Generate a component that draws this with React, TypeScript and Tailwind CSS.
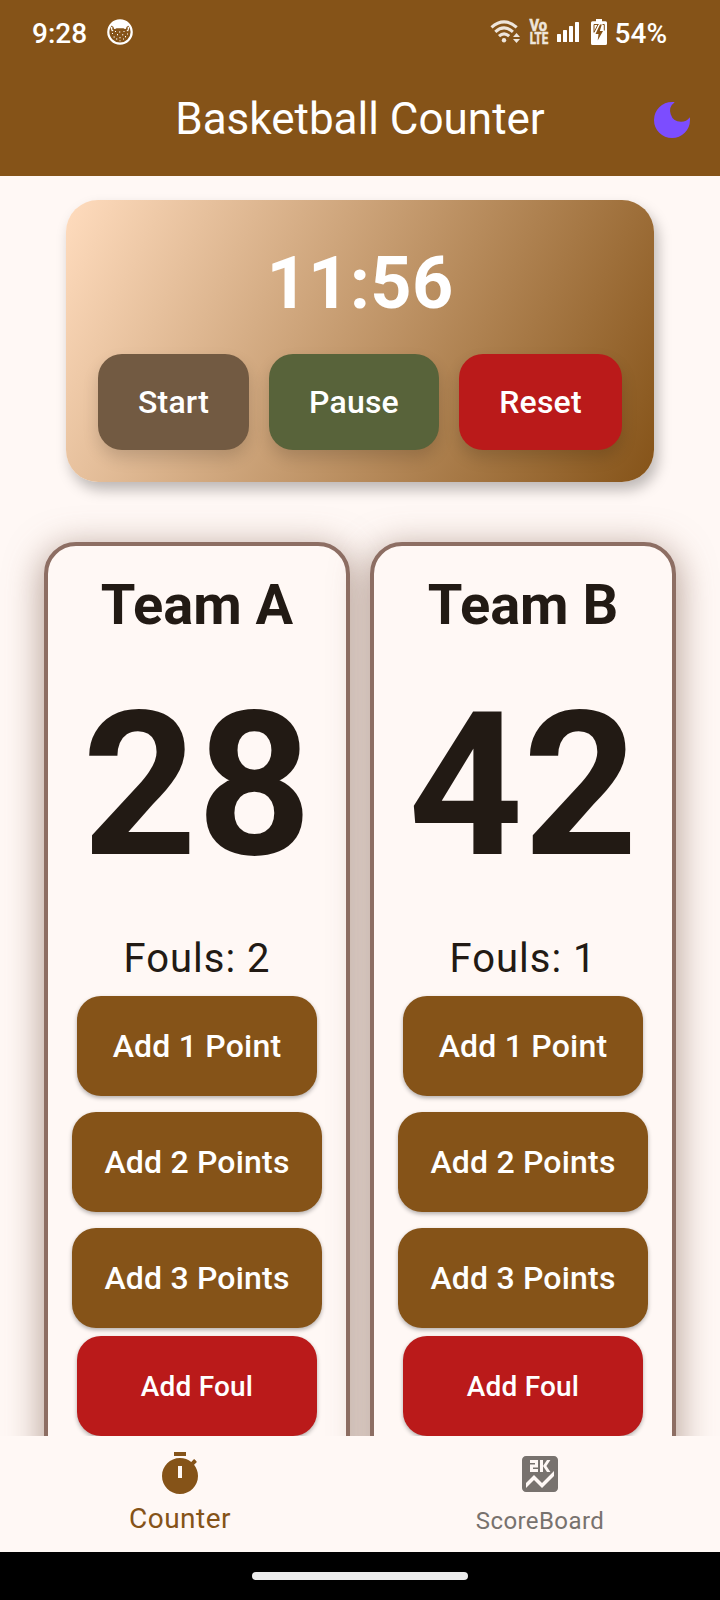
import React from "react";
import { MdDarkMode, MdScore } from "react-icons/md";

function CatIcon() {
  return (
    <svg className="ml-5 mt-[1px] h-[26px] w-[26px]" viewBox="0 0 26 26">
      <circle cx="13" cy="13" r="11.7" fill="none" stroke="#fff" strokeWidth="2.2" />
      <path
        d="M4 6C6 3 9 1.200 13 1.200S20 3 22 6L19.500 8C19.300 9.500 18.800 10.300 17.800 10L16.500 9.200H9.500L8.200 10C7.200 10.300 6.700 9.500 6.500 8Z"
        fill="#fff"
      />
      <g fill="#fff">
        <path d="M3.500 8.500l1.800-1v3l1.300 1.500-1.800.3zM22.500 8.500l-1.800-1v3L19.400 12l1.800.3z" />
        <rect x="5" y="14" width="1" height="1" />
        <rect x="8" y="12" width="1" height="1" />
        <rect x="12" y="12.500" width="1.300" height="1" />
        <rect x="16.500" y="12" width="1" height="1" />
        <rect x="20" y="14.500" width="1" height="1" />
        <rect x="10" y="15" width="1" height="1.300" />
        <rect x="15" y="15.300" width="1.300" height="1" />
        <rect x="6.500" y="17.500" width="1.300" height="1" />
        <rect x="18" y="17" width="1" height="1.300" />
        <rect x="9" y="19.500" width="1.300" height="1" />
        <rect x="12.500" y="18" width="1" height="1.300" />
        <rect x="16" y="19.500" width="1" height="1" />
        <rect x="12.500" y="21.300" width="1" height="1" />
      </g>
    </svg>
  );
}

function SystemIcons() {
  return (
    <svg className="h-[28px] w-[120px] overflow-visible" viewBox="490 18 120 28">
      <g fill="none" stroke="#eee5db" strokeWidth="3.100">
        <path d="M491.500 27.300Q504 16.300 516.700 27.300" />
        <path d="M495.300 31.800Q504 24 512.900 31.800" />
        <path d="M499 36.200Q504 31.700 509.200 36.200" />
      </g>
      <circle cx="504" cy="40.200" r="2.200" fill="#eee5db" />
      <path d="M513 37l3.500-4 3.500 4zM513 39l3.500 4 3.500-4z" fill="#eee5db" />
      <g
        fill="#eee5db"
        stroke="#eee5db"
        strokeWidth="0.600"
        fontFamily="Roboto, sans-serif"
        fontWeight="700"
      >
        <text x="529.500" y="31" fontSize="16" textLength="17.500" lengthAdjust="spacingAndGlyphs">Vo</text>
        <text x="529.700" y="43.800" fontSize="16" textLength="18.500" lengthAdjust="spacingAndGlyphs">LTE</text>
      </g>
      <g fill="#fff">
        <rect x="557" y="34" width="4" height="8" rx="0.600" />
        <rect x="563" y="30" width="4" height="12" rx="0.600" />
        <rect x="569" y="26" width="4" height="16" rx="0.600" />
        <rect x="575" y="22" width="4" height="20" rx="0.600" />
        <path d="M596 19h6v2.300h3.500q1.500 0 1.500 1.500V43.500q0 1.500-1.500 1.500h-13q-1.500 0-1.500-1.500V22.800q0-1.500 1.500-1.500H596z" />
      </g>
      <path d="M600 24.500L595.500 34h3l-.8 6.500 5.300-9.500h-3.200l2-6.500z" fill="#855318" />
      <path d="M598.500 24.500h-4.500v7.800l4-7.800M602.500 24.500h1.800v6" fill="none" stroke="#855318" strokeWidth="1" />
    </svg>
  );
}

function StopwatchIcon() {
  return (
    <svg className="h-12 w-12" viewBox="0 0 24 24" fill="currentColor" fillRule="evenodd">
      <path d="M15 1H9v2h6V1zm-4 13h2V8h-2v6zm8.030-6.610l1.420-1.420c-.43-.51-.9-.99-1.410-1.410l-1.420 1.420C16.070 4.740 14.120 4 12 4c-4.970 0-9 4.030-9 9s4.020 9 9 9 9-4.030 9-9c0-2.120-.74-4.070-1.970-5.610z" />
    </svg>
  );
}

const timerButton =
  "flex h-24 items-center justify-center rounded-3xl text-[32px] font-medium tracking-[0.2px] text-white shadow-[0_8px_16px_rgba(0,0,0,0.15)]";

function TimerCard() {
  return (
    <section className="mx-auto mt-6 flex h-[282px] w-[588px] shrink-0 flex-col rounded-[32px] bg-[linear-gradient(115.6deg,#ffdcbe,#855318)] px-8 pt-[34px] shadow-[4px_8px_14px_rgba(0,0,0,0.26)]">
      <div className="h-[100px] text-center text-[72px] font-bold leading-[100px] tracking-[0.3px] text-white">11:56</div>
      <div className="mt-5 flex justify-between">
        <button className={`${timerButton} w-[151px] bg-[#725a42]`}>Start</button>
        <button className={`${timerButton} w-[170px] bg-[#58633a]`}>Pause</button>
        <button className={`${timerButton} w-[163px] bg-[#ba1a1a]`}>Reset</button>
      </div>
    </section>
  );
}

const actionButton =
  "flex h-[100px] shrink-0 items-center justify-center rounded-3xl text-white shadow-[0_2px_4px_rgba(0,0,0,0.3)]";

function TeamCard({ name, score, fouls }: { name: string; score: number; fouls: number }) {
  return (
    <section className="flex h-[940px] w-[306px] flex-col items-center rounded-[32px] border-4 border-[#8d6e63] bg-[#fff8f5] pt-[23px] text-[#221a14] shadow-[0_8px_34px_4px_rgba(138,106,92,0.58)]">
      <h2 className="h-[72px] text-[56px] font-bold leading-[72px]">{name}</h2>
      <div className="mt-7 h-[234px] text-[200px] font-bold leading-[234px]">{score}</div>
      <div className="mt-7 h-[56px] text-[40px] leading-[56px] tracking-[1px]">Fouls: {fouls}</div>
      <button className={`${actionButton} mt-[9px] w-[240px] bg-[#855318] text-[32px] font-medium tracking-[0.2px]`}>
        Add 1 Point
      </button>
      <button className={`${actionButton} mt-4 w-[250px] bg-[#855318] text-[32px] font-medium tracking-[0.2px]`}>
        Add 2 Points
      </button>
      <button className={`${actionButton} mt-4 w-[250px] bg-[#855318] text-[32px] font-medium tracking-[0.2px]`}>
        Add 3 Points
      </button>
      <button className={`${actionButton} mt-2 w-[240px] bg-[#ba1a1a] pt-[2px] text-[28px] font-medium tracking-[0.2px]`}>
        Add Foul
      </button>
    </section>
  );
}

export default function App() {
  return (
    <div className="flex h-[1600px] w-[720px] flex-col overflow-hidden bg-[#fff8f5] font-[Roboto,sans-serif]">
      <header className="h-[176px] shrink-0 bg-[#855318] text-white">
        <div className="flex h-16 items-start pl-8 pr-[53px] pt-[18px] text-[28px] font-medium leading-[32px]">
          <span>9:28</span>
          <CatIcon />
          <div className="ml-auto flex items-start gap-[5px]">
            <SystemIcons />
            <span>54%</span>
          </div>
        </div>
        <div className="grid h-[112px] grid-cols-[72px_1fr_72px] items-center">
          <h1 className="col-start-2 pb-[2px] text-center text-[44px] leading-[56px]">Basketball Counter</h1>
          <button className="text-[#7c4dff]" aria-label="Dark mode">
            <MdDarkMode className="h-12 w-12" />
          </button>
        </div>
      </header>
      <main className="flex min-h-0 flex-1 flex-col overflow-hidden">
        <TimerCard />
        <div className="mt-[60px] flex shrink-0 justify-center gap-5">
          <TeamCard name="Team A" score={28} fouls={2} />
          <TeamCard name="Team B" score={42} fouls={1} />
        </div>
      </main>
      <nav className="grid h-[116px] shrink-0 grid-cols-2 bg-[#fff8f5]">
        <button className="flex flex-col items-center pt-[14px] text-[#855318]">
          <StopwatchIcon />
          <span className="mt-[5px] text-[28px] leading-[32px] tracking-[0.5px]">Counter</span>
        </button>
        <button className="flex flex-col items-center pt-[14px] text-[#78726e]">
          <MdScore className="h-12 w-12" />
          <span className="mt-[7px] text-[24px] leading-[32px] tracking-[0.4px]">ScoreBoard</span>
        </button>
      </nav>
      <footer className="flex h-12 shrink-0 justify-center bg-black pt-5">
        <div className="h-2 w-[216px] rounded-full bg-[#ececec]" />
      </footer>
    </div>
  );
}
